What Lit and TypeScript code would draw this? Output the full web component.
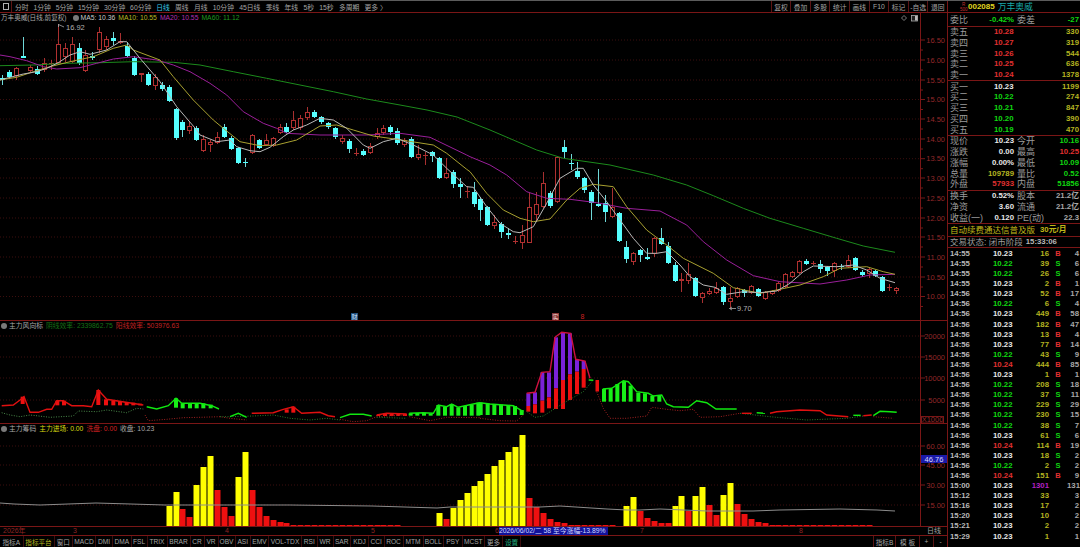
import { LitElement, html, css, svg } from "lit";
import { customElement } from "lit/decorators.js";

type P = [number, number];
const zp = (ox: number, oy: number, pts: number[][]): P[] => pts.map(([x, y]) => [ox + x / 3, oy + y / 3] as P);
const pl = (pts: P[]) => pts.map((p) => p[0].toFixed(1) + "," + p[1].toFixed(1)).join(" ");
const cx = (i: number) => 2.3 + 6.93 * i;

// bodyTop, bodyBottom, wickTop, wickBottom, up(1)/down(0)
const CANDLES: number[][] = [
  [78,80,75,85,0],[72,77,70,79,0],[68,76,67,80,1],[56,58,37,58,0],[67,71,65,72,1],[69,74,66,75,0],[63,70,58,72,1],[63,64,60,70,1],
  [44,63,24,65,1],[48,57,43,62,1],[44,62,37,63,1],[48,63,43,65,0],[55,71,50,72,1],[56,58,52,60,0],[32,50,27,53,1],[39,47,36,50,1],
  [38,41,32,45,0],[41,43,33,44,1],[46,56,42,57,0],[58,75,56,76,0],[73,75,73,82,1],[74,85,72,86,0],[77,86,74,90,1],[85,89,82,91,0],
  [87,101,85,102,0],[109,138,108,140,0],[122,130,120,137,0],[126,131,122,134,1],[128,140,126,141,0],[139,151,135,152,1],[142,145,140,152,1],[137,143,132,144,1],
  [127,137,124,138,0],[138,149,136,150,0],[148,163,147,164,0],[162,163,158,167,0],[135,153,134,154,1],[140,148,139,149,0],[140,145,134,146,1],[138,146,137,147,1],
  [127,133,124,134,1],[127,132,123,133,0],[120,128,111,130,1],[118,128,115,130,1],[112,118,107,120,1],[112,117,110,118,0],[117,122,116,124,0],[123,127,122,129,0],
  [128,137,127,139,0],[138,142,135,144,1],[141,149,139,153,0],[153,154,148,156,1],[151,155,149,156,0],[146,153,143,154,1],[133,137,128,139,1],[128,133,125,135,1],
  [127,132,125,135,0],[131,143,128,145,0],[140,145,138,147,1],[139,157,137,158,0],[154,158,145,160,1],[155,156,152,165,1],[152,156,151,162,0],[158,178,157,179,0],
  [173,178,158,179,1],[172,184,170,188,0],[184,187,178,198,0],[191,192,186,198,1],[192,204,182,207,0],[199,210,197,221,0],[207,225,206,226,0],[222,226,215,229,1],
  [224,232,222,238,0],[233,235,228,239,0],[241,242,236,244,1],[235,243,225,249,1],[207,243,193,243,1],[204,215,192,222,1],[183,207,172,208,1],[193,206,191,208,0],
  [157,202,156,203,1],[147,152,140,158,0],[163,164,154,170,0],[171,177,162,179,0],[178,190,177,193,0],[192,203,190,220,0],[204,206,169,207,0],[203,212,195,222,0],
  [207,217,188,218,1],[213,241,212,242,0],[247,259,241,263,0],[253,262,252,265,1],[250,255,249,262,0],[257,259,248,260,0],[238,254,237,257,1],[238,244,228,245,0],
  [246,263,242,264,0],[265,281,262,282,0],[279,281,273,292,1],[274,281,263,284,1],[278,296,277,297,0],[293,298,292,303,1],[291,294,288,295,1],[288,293,282,294,1],
  [287,302,286,305,0],[298,302,287,308,1],[288,297,287,298,1],[290,293,289,297,0],[286,293,285,294,1],[289,296,288,297,0],[292,299,291,300,1],[291,294,290,295,1],
  [283,291,282,292,1],[274,287,273,288,1],[272,277,271,278,1],[261,273,260,274,1],[261,264,259,265,0],[263,264,261,265,1],[264,269,260,273,0],[267,271,266,276,0],
  [263,271,262,277,1],[266,267,264,270,0],[260,267,255,268,1],[258,270,257,271,0],[272,275,270,277,0],[269,274,268,278,1],[271,276,270,277,0],[277,291,276,292,0],
  [287,288,284,291,1],[288,291,287,294,1],
];

const MA5 = [...zp(0,0,[[0,240],[30,232],[70,222],[110,215],[140,205],[175,188],[210,165],[240,155],[270,163],[320,150],[360,125],[380,125],[420,175],[480,245],[530,320],[590,390]]),
  ...zp(0,130,[[600,15],[650,35],[690,30],[710,50],[750,62],[780,65],[810,52],[850,20]]),
  ...zp(0,0,[[880,390],[920,375],[960,355],[1000,360],[1040,385]]),
  ...zp(0,130,[[1090,45],[1110,55],[1150,35],[1190,25],[1240,45],[1300,75],[1340,115],[1400,170]]),
  ...zp(470,130,[[10,172],[50,230],[90,280],[130,305],[150,308],[190,290],[230,220],[270,145],[320,115],[340,115],[370,165],[410,215],[450,270],[490,325],[530,370],[560,370],[590,365],[630,405],[660,440],[700,465],[735,472],[770,493],[820,485],[870,488],[920,483],[960,460],[1000,425],[1030,408],[1100,410],[1150,405],[1190,420],[1230,445],[1275,458]])];
const MA10 = [...zp(0,0,[[0,240],[50,232],[100,215],[150,200],[210,185],[280,170],[340,145],[380,135],[400,150],[480,180],[520,230],[580,300],[640,360],[670,385]]),
  ...zp(0,130,[[720,35],[780,47],[830,45],[890,30],[940,0]]),
  ...zp(0,0,[[960,378],[1010,375],[1060,390]]),
  ...zp(0,130,[[1120,18],[1190,28],[1300,45],[1340,70],[1400,118]]),
  ...zp(470,130,[[0,125],[50,190],[100,240],[150,265],[190,275],[240,267],[290,210],[330,175],[370,163],[430,170],[470,230],[530,300],[590,345],[640,385],[730,430],[790,473],[870,490],[930,478],[990,465],[1060,440],[1110,415],[1190,410],[1240,425],[1275,433]])];
const MA20 = [...zp(0,0,[[0,165],[30,170],[80,182],[130,200],[170,207],[240,203],[290,190],[340,177],[400,170],[470,180],[520,195],[570,215],[630,250],[680,285],[730,335],[790,370],[830,385]]),
  ...zp(0,130,[[860,10],[960,15],[1100,15],[1200,10],[1290,22],[1400,75]]),
  ...zp(470,130,[[0,80],[60,105],[110,135],[170,185],[230,205],[300,208],[380,218],[470,235],[570,243],[650,285],[700,335],[770,390],[850,437],[930,455],[1050,462],[1130,450],[1200,435],[1275,433]])];
const MA60 = [...zp(0,0,[[0,197],[100,195],[200,190],[300,188],[400,185],[520,187],[600,195],[700,215],[800,235],[900,255],[1000,275],[1100,297],[1200,315]]),
  [427,110] as P,[457,117] as P,
  ...zp(470,130,[[60,0],[130,30],[200,60],[280,85],[420,105],[550,135],[650,165],[730,197],[820,235],[900,265],[1000,295],[1100,325],[1180,348],[1275,367]])];

const RED = "#e01010", GRN = "#10e810";
const W8 = (a: number[][]) => zp(0, 310, a);
const W9 = (a: number[][]) => zp(480, 310, a);
const FLOW_LINES: [string, P[]][] = [
  [RED, W8([[5,287],[40,285],[60,270],[72,260],[90,307],[115,307],[140,298],[155,298],[170,272],[190,272],[215,287],[250,287],[275,290],[295,240],[320,268],[430,285]])],
  [GRN, W8([[440,290],[470,297],[505,287],[528,265],[545,280],[600,280],[635,287],[657,297]])],
  [GRN, W8([[690,320],[715,310],[740,322]])],
  [RED, W8([[755,310],[820,308],[850,298],[880,290],[905,310],[960,307],[985,317],[1005,320]])],
  [GRN, W8([[1020,323],[1050,313],[1090,313],[1115,318]])],
  [RED, W8([[1130,315],[1160,310],[1220,312]])],
  [GRN, W8([[1228,310],[1270,308],[1300,310],[1315,285],[1340,290],[1355,282],[1375,292],[1420,282],[1440,278]])],
  [GRN, W9([[0,278],[30,282],[100,287],[130,305]])],
  ["#d01040", W9([[140,250],[165,247],[185,187],[210,185],[225,82],[245,67],[272,70],[287,148],[315,153],[330,205]])],
  [GRN, W9([[326,210],[340,211]])],
  [GRN, W9([[368,237],[395,235],[430,212],[445,215],[470,245],[505,250],[520,258],[545,255],[560,282],[580,290],[625,292],[650,272],[680,278],[708,297],[770,297]])],
  [RED, W9([[785,310],[815,310]])],
  [GRN, W9([[830,308],[855,310]])],
  [RED, W9([[870,310],[890,305],[960,300],[1020,302],[1040,315],[1105,320]])],
  [GRN, W9([[1120,316],[1142,316]])],
  [RED, W9([[1150,317],[1175,315]])],
  [GRN, W9([[1180,317],[1200,304],[1230,305],[1250,307]])],
];
const FLOW_DOTS: [string, P[]][] = [
  ["#4a8a4a", W8([[5,308],[30,315],[60,320],[90,315],[150,322],[220,318],[235,303],[290,305],[320,300],[380,308],[410,295],[430,297]])],
  ["#a02020", W8([[435,315],[445,332],[500,328],[550,323],[600,322],[660,320],[690,325],[740,330]])],
  ["#2a7a2a", W8([[660,320],[690,320],[760,318],[820,315],[870,325],[930,330],[980,325],[1020,330]])],
  ["#a02020", W8([[1020,328],[1060,335],[1100,332],[1130,320],[1220,315]])],
  ["#2a7a2a", W8([[1130,322],[1220,325]])],
  ["#a02020", W8([[1228,320],[1290,332],[1340,322],[1440,323]])],
  ["#a02020", W9([[0,325],[60,332],[110,333],[130,315]])],
  ["#2a7a2a", W9([[140,305],[165,322],[190,318],[250,280],[310,245],[340,210]])],
  ["#a02020", W9([[350,245],[370,295],[390,325],[440,325],[500,318],[515,292],[560,298],[600,302],[640,298],[660,322],[720,320],[780,310]])],
  ["#2a7a2a", W9([[780,310],[870,320],[980,330],[1100,325],[1150,318]])],
  ["#a02020", W9([[1180,320],[1240,325]])],
];
// zoom x, top, bottom
const REDB8 = [[68,260,282],[172,272,286],[192,272,286],[295,240,285],[318,268,286],[340,272,286],[360,274,286],[380,276,286],[400,278,286],[420,281,286],[860,298,308],[880,290,308],[1135,315,318],[1155,311,318],[1175,311,318],[1195,312,318],[1215,312,318]];
const GRNB8 = [[528,265,293],[548,280,295],[570,282,295],[590,282,295],[610,280,295],[632,284,295],[1232,310,317],[1252,309,317],[1272,308,317],[1292,310,317],[1315,285,317],[1335,289,317],[1355,282,317],[1375,292,317],[1395,288,317],[1415,284,317],[1435,278,317]];
const GRNB9 = [[2,278,315],[23,282,315],[43,283,315],[63,284,315],[85,286,315],[105,288,315],[125,300,315],[372,237,275],[392,235,275],[412,222,275],[432,213,275],[452,227,275],[475,248,275],[495,250,275],[517,258,275],[538,255,275]];
const PURP9 = [[145,250,288,305],[165,247,283,310],[187,187,272,308],[207,187,262,295],[228,82,235,297],[249,67,210,297],[270,70,193,270],[291,148,185,252],[311,153,177,233]];

// pane 3 bars: index -> [top y, yellow?]
const Y = 1, R = 0;
const CHIP: [number, number, number][] = [
  [24,506,Y],[25,492,Y],[26,509,R],[27,517,R],[28,485,Y],[29,467,Y],[30,456,Y],[31,490,R],[32,507,R],[33,516,R],[34,477,Y],[35,452,Y],[36,490,R],[37,507,R],[38,516,R],[39,520,R],[40,522,R],[41,523,R],
  ...Array.from({ length: 16 }, (_, k) => [42 + k, 525, R] as [number, number, number]),
  [63,513,Y],[64,519,R],[65,508,Y],[66,500,Y],[67,493,Y],[68,486,Y],[69,481,Y],[70,474,Y],[71,466,Y],[72,460,Y],[73,452,Y],[74,447,Y],[75,435,Y],[76,498,R],[77,507,R],[78,513,R],[79,519,R],[80,522,R],[81,523,R],
  ...Array.from({ length: 7 }, (_, k) => [82 + k, 525, R] as [number, number, number]),
  [90,506,Y],[91,497,Y],[92,511,R],[93,518,R],[94,521,R],[95,523,R],[96,523,R],[97,506,Y],[98,496,Y],[99,511,R],[100,496,Y],[101,487,Y],[102,505,R],[103,515,R],[104,495,Y],[105,483,Y],[106,504,R],[107,514,R],[108,519,R],[109,522,R],[110,523,R],
  ...Array.from({ length: 15 }, (_, k) => [111 + k, 525, R] as [number, number, number]),
];
const CLOSE: P[] = [[0,503],[14,504],[40,505],[96,503],[165,505],[240,505],[290,505],[372,506],[437,508],[450,507],[540,507],[560,506],[607,509],[627,510],[640,510],[660,509],[707,511],[753,511],[780,510],[840,509],[877,510],[895,511]];

const PRICE_AXIS: [string, number][] = [["16.50",40],["16.00",60],["15.50",80],["15.00",99.5],["14.50",119],["14.00",139],["13.50",158.7],["13.00",178],["12.50",198],["12.00",218],["11.50",237],["11.00",257],["10.50",277],["10.00",296.5]];
const FLOW_AXIS: [string, number][] = [["20000",336],["15000",357],["10000",378],["5000",400]];
const CHIP_AXIS: [string, number][] = [["60.00",446],["45.00",465],["30.00",485],["15.00",505]];

const TABS: [string, number, string?][] = [["指标A",23.5],["指标平台",31,"hi"],["窗口",18.5],["MACD",23],["DMI",17],["DMA",18.5],["FSL",16],["TRIX",20],["BRAR",23],["CR",14],["VR",14],["OBV",17],["ASI",15.5],["EMV",18],["VOL-TDX",33],["RSI",15.5],["WR",16],["SAR",17.5],["KDJ",18],["CCI",15.5],["ROC",19],["MTM",20],["BOLL",20.5],["PSY",18.5],["MCST",22.5],["更多",18],["设置",18,"ok"]];
const PERIODS: [string, boolean?][] = [["分时"],["1分钟"],["5分钟"],["15分钟"],["30分钟"],["60分钟"],["日线",true],["周线"],["月线"],["10分钟"],["45日线"],["季线"],["年线"],["5秒"],["15秒"],["多周期"],["更多 〉"]];
const ACTIONS = ["复权","叠加","多股","统计","画线","F10","标记","-自选","退回"];

const ASKS = [["卖五","10.28","330"],["卖四","10.27","319"],["卖三","10.26","544"],["卖二","10.25","636"],["卖一","10.24","1378"]];
const BIDS: string[][] = [["买一","10.23","1199","w"],["买二","10.22","274","g"],["买三","10.21","847","g"],["买四","10.20","390","g"],["买五","10.19","470","g"]];
const STATS1 = [["现价","10.23","w","今开","10.16","g"],["涨跌","0.00","w","最高","10.25","r"],["涨幅","0.00%","w","最低","10.09","g"],["总量","109789","y","量比","0.52","g"],["外盘","57933","r","内盘","51856","g"]];
const STATS2 = [["换手","0.52%","w","股本","21.2亿","n"],["净资","3.60","w","流通","21.2亿","n"],["收益(一)","0.120","w","PE(动)","22.3","n"]];
const T = (s: string) => s.trim().split(" ");
const TICKS: string[][] = [
  "14:55 10.23 16 B 4","14:55 10.22 39 S 6","14:55 10.22 26 S 6","14:55 10.23 2 B 1","14:56 10.23 52 B 17","14:56 10.22 6 S 4","14:56 10.23 449 B 58","14:56 10.23 182 B 47","14:56 10.23 13 B 4","14:56 10.23 77 B 14","14:56 10.22 43 S 9","14:56 10.24 444 B 85","14:56 10.23 1 B 1","14:56 10.22 208 S 18","14:56 10.22 37 S 11","14:56 10.22 229 S 29","14:56 10.22 230 S 15","14:56 10.22 38 S 7","14:56 10.23 61 S 6","14:56 10.24 114 B 19","14:56 10.23 18 S 2","14:56 10.22 2 S 2","14:56 10.24 151 B 9","15:00 10.23 1301 - 131","15:12 10.23 33 - 3","15:16 10.23 17 - 2","15:20 10.23 10 - 2","15:21 10.23 2 - 2","15:29 10.23 1 - 1",
].map(T);
const priceCls = (p: string) => (p === "10.22" ? "g" : p === "10.24" ? "r" : "w");

const axis = (items: [string, number][], minor = true) => svg`
  ${items.map(([t, y]) => svg`
    <line class="grid" x1="0" x2="920" y1=${y} y2=${y}></line>
    <line class="tick" x1="920" x2="925" y1=${y} y2=${y}></line>
    ${minor ? svg`<line class="tick" x1="920" x2="923" y1=${y + 10} y2=${y + 10}></line>` : ""}
    <text class="axt" x="945" y=${y + 2.5} text-anchor="end">${t}</text>`)}
  <line class="ax" x1="920.5" x2="920.5" y1="0" y2="560"></line>`;

@customElement("stock-chart")
export class StockChart extends LitElement {
  static styles = css`
    :host { display: block; position: relative; width: 947px; height: 513px; background: #000; }
    svg { display: block; width: 947px; }
    .p1 { height: 307px; }
    .p2, .p3 { height: 103px; border-top: 1px solid #7a1616; box-sizing: border-box; }
    .grid { stroke: #3c0e0e; stroke-width: 1; stroke-dasharray: 1 2; }
    .tick, .ax { stroke: #7a1616; stroke-width: 1; }
    .axt { fill: #93282a; font: 7.5px "Liberation Sans", sans-serif; }
    .ma { fill: none; stroke-width: 1; }
    .fl { fill: none; stroke-width: 1.4; }
    .mk { fill: #b0b0b0; font: 7.5px "Liberation Sans", sans-serif; }
    .legend { position: absolute; left: 0; display: flex; align-items: center; font: 6.8px/9px "Liberation Sans", "Noto Sans CJK SC", sans-serif; white-space: nowrap; color: #a8a8a8; }
    .legend span { margin-right: 3px; }
    .dot { width: 6px; height: 6px; border-radius: 50%; background: #7a7a7a; margin: 0 2px 0 1px; flex: none; }
    .l1 { top: 0; } .l2 { top: 308px; } .l3 { top: 411px; }
    .title { margin-right: 5px !important; margin-left: 1px; font-size: 6.6px; }
    .w { color: #c8c8c8; } .y { color: #b8b820; } .m { color: #b030b0; } .g { color: #1f9a1f; } .r { color: #c02020; } .dg { color: #157015; } .yy { color: #d8d810; } .rr { color: #d02020; }
  `;
  render() {
    return html`
      <svg class="p1" viewBox="0 13 947 307">
        ${axis(PRICE_AXIS)}
        ${CANDLES.map((c, i) => {
          const x = Math.round(cx(i));
          const col = c[4] ? "#b03030" : "#55ffff";
          const wick = c[4] ? "#a83030" : "#6fd8d8";
          return svg`<line x1=${x + 0.5} x2=${x + 0.5} y1=${c[2]} y2=${c[3]} stroke=${wick}></line>
            ${c[1] - c[0] <= 2
              ? svg`<rect x=${x - 2} y=${c[0]} width="5" height=${Math.max(1, c[1] - c[0])} fill=${col}></rect>`
              : svg`<rect x=${c[4] ? x - 1.5 : x - 2} y=${c[4] ? c[0] + 0.5 : c[0]} width=${c[4] ? 4 : 5} height=${c[4] ? c[1] - c[0] - 1 : c[1] - c[0]} fill=${c[4] ? "#000" : col} stroke=${c[4] ? col : "none"}></rect>`}`;
        })}
        <polyline class="ma" points=${pl(MA60)} stroke="#1c8a1c"></polyline>
        <polyline class="ma" points=${pl(MA20)} stroke="#9a1f9a"></polyline>
        <polyline class="ma" points=${pl(MA10)} stroke="#a8a030"></polyline>
        <polyline class="ma" points=${pl(MA5)} stroke="#b8b8b8"></polyline>
        <path d="M58.500 24V27M58.500 24.500L64 27" stroke="#aaa" fill="none" stroke-width=".8"></path>
        <text class="mk" x="66" y="30">16.92</text>
        <path d="M729.500 308.500H736M729.500 308.500L732 307M729.500 308.500L732 310" stroke="#aaa" fill="none" stroke-width=".8"></path>
        <text class="mk" x="737" y="311">9.70</text>
        <rect x="351" y="313" width="7" height="7" fill="#1d4e7c"></rect>
        <text x="354.500" y="319" text-anchor="middle" fill="#cfe4ff" font-size="6" font-family="Noto Sans CJK SC">财</text>
        <rect x="552" y="313" width="7" height="7" fill="#8a3a3a"></rect>
        <text x="555.500" y="319" text-anchor="middle" fill="#f0d0d0" font-size="6" font-family="Noto Sans CJK SC">实</text>
        <text x="582.500" y="319" text-anchor="middle" fill="#d02020" font-size="7" font-family="Liberation Sans">8</text>
        <path d="M904 15.500L906.500 18L904 20.500L901.500 18Z" fill="none" stroke="#9a9a9a" stroke-width=".8"></path>
        <rect x="911.500" y="15.500" width="6" height="5.500" fill="#222" stroke="#aaa" stroke-width=".8"></rect>
        <rect x="915" y="16" width="2.500" height="4.500" fill="#bbb"></rect>
      </svg>
      <svg class="p2" viewBox="0 321 947 102">
        ${axis(FLOW_AXIS, false)}
        ${REDB8.map(([z, a, b]) => svg`<rect x=${z / 3 - 2} y=${310 + a / 3} width="4" height=${(b - a) / 3} fill="#ee1010"></rect>`)}
        ${GRNB8.map(([z, a, b]) => svg`<rect x=${z / 3 - 2} y=${310 + a / 3} width="4" height=${(b - a) / 3} fill="#18f018"></rect>`)}
        ${GRNB9.map(([z, a, b]) => svg`<rect x=${480 + z / 3 - 2} y=${310 + a / 3} width="4" height=${(b - a) / 3} fill="#18f018"></rect>`)}
        ${PURP9.map(([z, a, m, b]) => svg`<rect x=${480 + z / 3 - 2} y=${310 + a / 3} width="4" height=${(m - a) / 3} fill="#7a22d8"></rect>
          <rect x=${480 + z / 3 - 2} y=${310 + m / 3} width="4" height=${(b - m) / 3} fill="#ee1010"></rect>`)}
        <rect x="595.500" y="380" width="3.500" height="11.500" fill="#ee1010"></rect>
        ${FLOW_DOTS.map(([c, p]) => svg`<polyline class="ma" points=${pl(p)} stroke=${c} stroke-dasharray="1 1.500" stroke-width=".8"></polyline>`)}
        ${FLOW_LINES.map(([c, p]) => svg`<polyline class="fl" points=${pl(p)} stroke=${c}></polyline>`)}
        <rect x="921.500" y="416.500" width="22" height="6.500" fill="#000" stroke="#7a1616"></rect>
        <text class="axt" x="932.500" y="422" text-anchor="middle">X1000</text>
      </svg>
      <svg class="p3" viewBox="0 424 947 102">
        ${axis(CHIP_AXIS, false)}
        ${CHIP.map(([i, top, y]) => svg`<rect x=${Math.round(cx(i)) - 2.5} y=${top} width="6" height=${526 - top} fill=${y ? "#ffff00" : "#ee1010"}></rect>`)}
        <polyline class="ma" points=${pl(CLOSE)} stroke="#8c8c8c"></polyline>
        <rect x="921" y="455" width="26.500" height="8" fill="#1a1aa8"></rect>
        <text x="934" y="461.500" text-anchor="middle" fill="#d8d8ff" font-size="7.500" font-family="Liberation Sans">46.76</text>
      </svg>
      <div class="legend l1">
        <span class="title">万丰奥威(日线,前复权)</span><i class="dot"></i>
        <span class="w">MA5: 10.36</span><span class="y">MA10: 10.55</span><span class="m">MA20: 10.55</span><span class="g">MA60: 11.12</span>
      </div>
      <div class="legend l2">
        <i class="dot"></i><span>主力风向标</span><span class="dg">阴线效率: 2339862.75</span><span class="r">阳线效率: 503976.63</span>
      </div>
      <div class="legend l3">
        <i class="dot"></i><span>主力筹码</span><span class="yy">主力进场: 0.00</span><span class="rr">洗盘: 0.00</span><span>收盘: 10.23</span>
      </div>
    `;
  }
}

@customElement("quote-panel")
export class QuotePanel extends LitElement {
  static styles = css`
    :host { display: block; width: 132px; height: 546px; background: #000; overflow: hidden; font: 8px/10px "Liberation Sans", "Noto Sans CJK SC", sans-serif; color: #b0b0b0; }
    .sec { border-bottom: 1px solid #7a1616; }
    .head { height: 11px; display: flex; align-items: center; padding-left: 12px; }
    .rs { font-size: 4.500px; line-height: 5px; color: #c03030; text-align: center; width: 7px; }
    .code { color: #e0d820; font-weight: 700; margin: 0 3px 0 1px; font-size: 8px; }
    .name { color: #18a8a8; font-size: 8.800px; }
    .lab { font-size: 9px; line-height: 10px; color: #9c9c9c; white-space: nowrap; }
    .num { font-weight: 700; font-size: 7.800px; white-space: nowrap; }
    .wb { height: 13px; display: grid; grid-template-columns: 64px 18px 1fr; column-gap: 3px; align-items: center; padding: 0 1px 0 2px; }
    .book { padding: 0 1px 0 2px; }
    .brow { height: 10.700px; display: grid; grid-template-columns: 44px 30px 1fr; align-items: center; }
    .stat { padding: 0 1px 0 2px; }
    .srow { height: 10.750px; display: grid; grid-template-columns: 64px 62px; column-gap: 3px; align-items: center; }
    .cell { display: flex; justify-content: space-between; align-items: center; white-space: nowrap; }
    .ra { text-align: right; }
    .ban { height: 12px; display: flex; align-items: center; padding-left: 2px; color: #c0b818; font-size: 8.500px; white-space: nowrap; }
    .ban b { margin-left: 5px; font-size: 7.800px; }
    .state { height: 10px; display: flex; align-items: center; padding-left: 2px; white-space: nowrap; }
    .state .lab { font-size: 8.500px; }
    .state .num { margin-left: 3px; color: #b8b8b8; }
    .ticks { padding: 1px 1px 0 2px; }
    .trow { height: 10.100px; display: grid; grid-template-columns: 43px 20px 36px 18px 1fr; align-items: center; }
    .tm { color: #b8b8b8; font-weight: 700; font-size: 7.800px; }
    .bs { text-align: center; font-weight: 700; font-size: 7.500px; }
    .w { color: #e8e8e8; } .g { color: #10d810; } .r { color: #e03030; } .y { color: #b4b420; } .n { color: #a8a8a8; } .p { color: #b020c0; }
  `;
  render() {
    return html`
      <div class="sec head"><div class="rs">R<br />500</div><span class="code">002085</span><span class="name">万丰奥威</span></div>
      <div class="sec wb">
        <div class="cell"><span class="lab">委比</span><span class="num g">-0.42%</span></div>
        <span class="lab">委差</span><span class="num g ra">-27</span>
      </div>
      <div class="sec book">
        ${ASKS.map((r) => html`<div class="brow"><span class="lab">${r[0]}</span><span class="num r">${r[1]}</span><span class="num y ra">${r[2]}</span></div>`)}
      </div>
      <div class="sec book">
        ${BIDS.map((r) => html`<div class="brow"><span class="lab">${r[0]}</span><span class="num ${r[3]}">${r[1]}</span><span class="num y ra">${r[2]}</span></div>`)}
      </div>
      <div class="sec stat">
        ${STATS1.map((r) => html`<div class="srow">
          <div class="cell"><span class="lab">${r[0]}</span><span class="num ${r[2]}">${r[1]}</span></div>
          <div class="cell"><span class="lab">${r[3]}</span><span class="num ${r[5]}">${r[4]}</span></div>
        </div>`)}
      </div>
      <div class="sec stat">
        ${STATS2.map((r) => html`<div class="srow">
          <div class="cell"><span class="lab">${r[0]}</span><span class="num ${r[2]}">${r[1]}</span></div>
          <div class="cell"><span class="lab">${r[3]}</span><span class="num ${r[5]}">${r[4]}</span></div>
        </div>`)}
      </div>
      <div class="sec ban">自动续费通达信普及版<b>30元/月</b></div>
      <div class="sec state"><span class="lab">交易状态: 闭市阶段</span><span class="num">15:33:06</span></div>
      <div class="ticks">
        ${TICKS.map((t) => html`<div class="trow">
          <span class="tm">${t[0]}</span>
          <span class="num ${priceCls(t[1])}">${t[1]}</span>
          <span class="num ra ${t[2] === "1301" ? "p" : "y"}">${t[2]}</span>
          <span class="bs ${t[3] === "B" ? "r" : t[3] === "S" ? "g" : ""}">${t[3] === "-" ? "" : t[3]}</span>
          <span class="num n ra">${t[4]}</span>
        </div>`)}
      </div>
    `;
  }
}

@customElement("app-root")
export class AppRoot extends LitElement {
  static styles = css`
    :host { display: block; width: 1080px; height: 547px; background: #000; }
    .root { display: flex; width: 1080px; height: 547px; background: #000; overflow: hidden; border-top: 1px solid #5c5c5c; box-sizing: border-box; font-family: "Liberation Sans", "Noto Sans CJK SC", sans-serif; }
    .left { width: 948px; flex: none; display: flex; flex-direction: column; border-right: 1px solid #7a1616; box-sizing: border-box; }
    .bar { height: 11px; flex: none; display: flex; align-items: stretch; border-bottom: 1px solid #7a1616; font-size: 6.800px; color: #a4a4a4; box-sizing: content-box; white-space: nowrap; }
    .box { width: 12px; flex: none; display: flex; align-items: center; justify-content: center; border-right: 1px solid #5a1414; box-sizing: border-box; }
    .box i { width: 4px; height: 5px; border: 1px solid #b0b0b0; }
    .periods { display: flex; gap: 4.900px; align-items: center; padding-left: 3px; }
    .on { color: #35c8e8; }
    .on ~ span { margin-left: .4px; }
    .grow { flex: 1; }
    .actions { display: flex; }
    .actions span { width: 19.600px; display: flex; align-items: center; justify-content: center; border-left: 1px solid #5a1414; box-sizing: border-box; }
    .dates { height: 8px; flex: none; display: flex; position: relative; border-top: 1px solid #7a1616; font: 7px/8px "Liberation Sans", "Noto Sans CJK SC", sans-serif; color: #8f2424; }
    .dates .d { position: absolute; top: 0; }
    .sel { position: absolute; left: 499px; top: 0; width: 109px; height: 8px; background: #12129a; color: #d0d8ff; font-size: 6.800px; white-space: nowrap; overflow: hidden; }
    .dw { position: absolute; left: 921px; width: 26px; text-align: center; color: #a0a0a0; top: 0; }
    .tabs { flex: 1; display: flex; align-items: center; border-top: 1px solid #7a1616; font-size: 6.600px; color: #a4a4a4; white-space: nowrap; }
    .tabs span { display: flex; align-items: center; justify-content: center; height: 100%; border-right: 1px solid #3c0e0e; box-sizing: border-box; }
    .hi { color: #b8b820; } .ok { color: #20b080; }
    .rtabs { display: flex; height: 100%; margin-left: auto; }
    .rtabs span { border-left: 1px solid #5a1414; border-right: none; }
  `;
  render() {
    return html`<div class="root">
      <div class="left">
        <div class="bar">
          <div class="box"><i></i></div>
          <div class="periods">${PERIODS.map(([t, on]) => html`<span class=${on ? "on" : ""}>${t}</span>`)}</div>
          <div class="grow"></div>
          <div class="actions">${ACTIONS.map((t) => html`<span>${t}</span>`)}</div>
        </div>
        <stock-chart></stock-chart>
        <div class="dates">
          <span class="d" style="left:3px">2026年</span>
          ${[[73,"3"],[225,"4"],[371,"5"],[495,"6"],[640,"7"],[799,"8"]].map(([x, t]) => html`<span class="d" style="left:${x}px">${t}</span>`)}
          <span class="sel">2026/06/02/二 58 至今涨幅-13.89%</span>
          <span class="dw">日线</span>
        </div>
        <div class="tabs">
          ${TABS.map(([t, w, c]) => html`<span class=${c ?? ""} style="width:${w}px">${t}</span>`)}
          <div class="rtabs">
            <span style="width:22px">指标B</span><span style="width:24px">模 板</span>
            <span style="width:14px">+</span><span style="width:14px">-</span>
          </div>
        </div>
      </div>
      <quote-panel></quote-panel>
    </div>`;
  }
}
